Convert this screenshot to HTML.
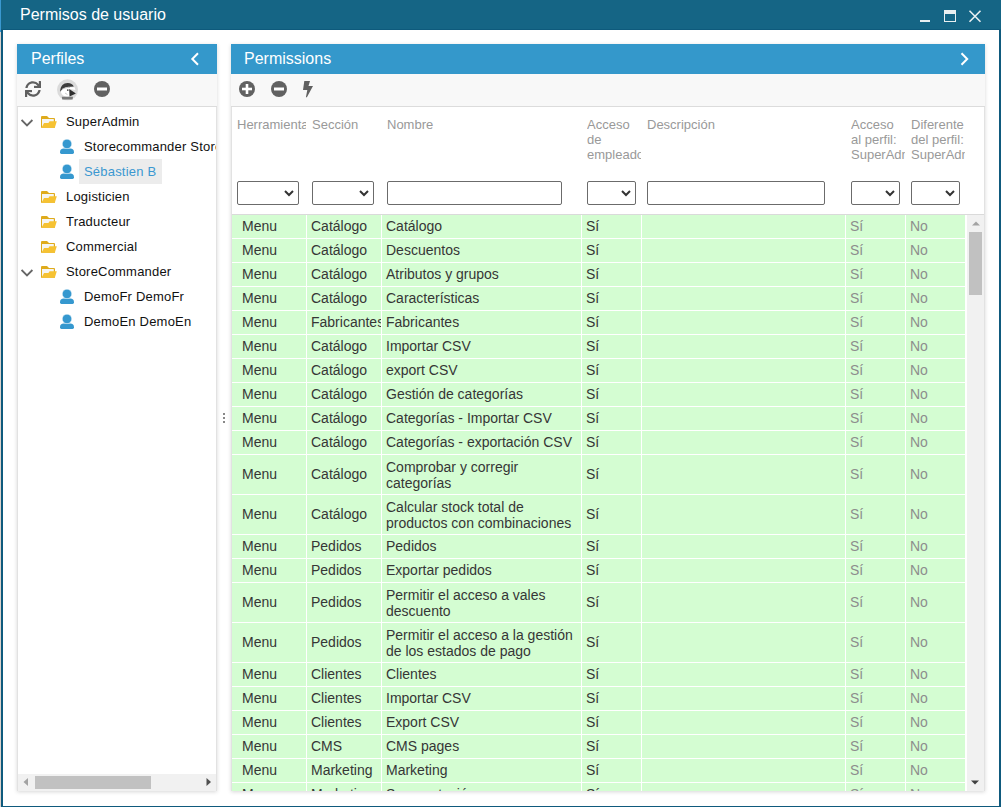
<!DOCTYPE html>
<html><head><meta charset="utf-8">
<style>
*{box-sizing:border-box}
html,body{margin:0;padding:0}
body{width:1001px;height:807px;overflow:hidden;position:relative;background:#fff;font-family:"Liberation Sans",sans-serif}
.abs{position:absolute}
#edge{position:absolute;left:0;top:0;width:1px;height:807px;background:#dcd2cc}
#edge2{position:absolute;left:0;top:0;width:1px;height:32px;background:#3a98d0}
#title{position:absolute;left:1px;top:0;width:1000px;height:30px;background:#156585;border-bottom:1px solid #0e5a7c}
#title .t{position:absolute;left:19px;top:6px;font-size:16px;line-height:18px;color:#fff}
#bl{position:absolute;left:1px;top:29px;width:2px;height:778px;background:#0f5a7d}
#br{position:absolute;left:999px;top:29px;width:2px;height:778px;background:#0f5a7d}
#bb{position:absolute;left:1px;top:806px;width:1000px;height:1px;background:#0f5a7d}
.panel{position:absolute;top:44px;height:747px;background:#fff;box-shadow:0 1px 4px rgba(0,0,0,.16)}
.ph{position:absolute;left:0;top:0;right:0;height:30px;background:#3498cb;color:#fff;font-size:16px;line-height:18px}
.ph .t{position:absolute;top:6px}
.tb{position:absolute;left:0;right:0;top:30px;height:33px;background:#f8f8f8;border-bottom:1px solid #dcdcdc}
.pbody{position:absolute;left:0;right:0;top:63px;bottom:0;overflow:hidden;border-left:1px solid #e2e2e2;border-right:1px solid #e2e2e2}
.tree{font-size:13px;color:#111}
.tr{position:absolute;height:25px;line-height:25px;white-space:nowrap;letter-spacing:0.2px}
.hdr{position:absolute;left:0;top:0;width:752px;height:108px;border-bottom:1px solid #dadada;background:#fff}
.hc{position:absolute;top:10px;font-size:13px;line-height:15px;color:#999;overflow:hidden;white-space:nowrap}
.sel{position:absolute;top:74px;height:24px;border:1px solid #6b6b6b;border-radius:2px;background:#fff}
.grid{position:absolute;left:0;top:108px;width:735px;height:576px;overflow:hidden}
.row{display:flex;border-bottom:1px solid #fff;box-sizing:content-box}
.cell{background:#d4fdd2;border-right:1px solid #fff;box-sizing:border-box;display:flex;align-items:center;padding:0 0 2px 4px;font-size:14px;line-height:16px;overflow:hidden;white-space:nowrap}
.cell span{display:block}
.cell.c1{padding-left:10px}
.r2 .cell{padding-bottom:2px}
.r2 .cell.ml{padding-bottom:0px}
.cell{margin-right:0}
.dk{color:#363636}
.gr{color:#8d8d8d}
</style></head><body>
<div id="edge"></div><div id="edge2"></div>
<div id="title"><div class="t">Permisos de usuario</div>
 <svg class="abs" style="left:917px;top:0" width="70" height="30" viewBox="0 0 70 30">
  <rect x="2" y="20" width="10" height="2" fill="#e9eff1"/>
  <rect x="26.5" y="10.5" width="11" height="11" fill="none" stroke="#e9eff1" stroke-width="1"/>
  <rect x="26" y="10" width="12" height="4" fill="#e9eff1"/>
  <path d="M51.5 10.7 L62.5 21.7 M62.5 10.7 L51.5 21.7" stroke="#e9eff1" stroke-width="1.6"/>
 </svg>
</div>
<div id="bl"></div><div id="br"></div><div id="bb"></div>

<!-- left panel -->
<div class="panel" style="left:17px;width:200px">
 <div class="ph"><div class="t" style="left:14px">Perfiles</div>
  <svg class="abs" style="left:173px;top:8px" width="10" height="14" viewBox="0 0 10 14"><path d="M8 1.2 L2.3 7 L8 12.8" fill="none" stroke="#fff" stroke-width="2"/></svg>
 </div>
 <div class="tb">
  <svg class="abs" style="left:8px;top:7px" width="16" height="16" viewBox="0 0 512 512"><path fill="#5f5f5f" d="M440.65 12.57l4 82.77A247.16 247.16 0 0 0 255.830 8C134.73 8 33.91 94.92 12.29 209.82A12 12 0 0 0 24.09 224h49.05a12 12 0 0 0 11.670-9.26 175.91 175.91 0 0 1 317-56.94l-101.46-4.86a12 12 0 0 0-12.570 12v47.41a12 12 0 0 0 12 12H500a12 12 0 0 0 12-12V12a12 12 0 0 0-12-12h-47.37a12 12 0 0 0-11.980 12.57zM255.83 432a175.61 175.61 0 0 1-146-77.8l101.8 4.87a12 12 0 0 0 12.570-12v-47.4a12 12 0 0 0-12-12H12a12 12 0 0 0-12 12V500a12 12 0 0 0 12 12h47.35a12 12 0 0 0 12-12.6l-4.15-82.57A247.17 247.17 0 0 0 255.83 504c121.110 0 221.930-86.92 243.550-201.82a12 12 0 0 0-11.800-14.18h-49.05a12 12 0 0 0-11.670 9.26A175.86 175.86 0 0 1 255.830 432z"/></svg>
  <svg class="abs" style="left:40px;top:5px" width="22" height="22" viewBox="0 0 22 22">
   <circle cx="10.5" cy="10.8" r="10.5" fill="#dbdbdb"/>
   <path d="M3.8 13 C4.5 9.5 8.5 8.2 13 8.2 L17.5 8.2 L18.5 11 L12.4 10 L12.6 17.6 C9 18.2 5 17 3.8 13 Z" fill="#fff"/>
   <path d="M3.2 12.2 C3.5 6.5 6.5 4 10.5 3.9 C13.5 3.8 15.8 5 16.8 7.6 L13 7.8 C9 7.8 5.5 9 3.6 12.4 Z" fill="#3b3b3b"/>
   <path d="M5 9.8 C7 8.6 10 8.1 13 8.2 L13 8.9 C10 8.9 7.5 9.3 5.5 10.5 Z" fill="#b8b8b8"/>
   <path d="M12.2 9.9 L18.9 14.6 L12.6 17.4 Z" fill="#2e2e2e"/>
   <circle cx="10.8" cy="11.1" r="0.9" fill="#444"/>
   <path d="M8 14 L10.5 15.6" stroke="#999" stroke-width="0.5"/>
   <path d="M4.8 17.8 L16 17.8 L15.6 20.4 L5.2 20.4 Z" fill="#666" opacity="0.85"/>
  </svg>
  <svg class="abs" style="left:77px;top:7px" width="16" height="16" viewBox="0 0 16 16">
   <circle cx="8" cy="8" r="8" fill="#616161"/><rect x="3" y="6.5" width="10" height="3" fill="#fff"/>
  </svg>
 </div>
 <div class="pbody tree">
  <svg class="abs" style="left:3px;top:12px" width="13" height="8" viewBox="0 0 13 8"><path d="M0.6 1 L6 6.4 L11.4 1" fill="none" stroke="#666" stroke-width="1.8"/></svg>
  <svg class="abs" style="left:23px;top:9px" width="16" height="12" viewBox="0 0 16 12"><path d="M0 1 Q0 0 1 0 L6 0 L8 2 L13 2 Q14 2 14 3 L14 11.8 L0 11.8 Z" fill="#dfab1c"/><path d="M1 3 L12.8 3 L12.8 7 L1 11 Z" fill="#f5f5f3"/><path d="M3 7 L7.4 7 L8.6 5.2 L15.8 5.2 L13.8 11.8 L0.5 11.8 Z" fill="#f6c232"/></svg>
  <div class="tr" style="left:48px;top:2px">SuperAdmin</div>
  <svg class="abs" style="left:42px;top:32px" width="14" height="16" viewBox="0 0 14 16"><path d="M0 13.3 Q0 9.6 3.8 9.6 L10.2 9.6 Q14 9.6 14 13.3 L14 13.6 Q14 15 12.6 15 L1.4 15 Q0 15 0 13.6 Z" fill="#3598cf"/><circle cx="7" cy="4.9" r="4.75" fill="#3598cf" stroke="#fff" stroke-width="0.5"/></svg>
  <div class="tr" style="left:66px;top:27px">Storecommander Storecommander</div>
  <svg class="abs" style="left:42px;top:57px" width="14" height="16" viewBox="0 0 14 16"><path d="M0 13.3 Q0 9.6 3.8 9.6 L10.2 9.6 Q14 9.6 14 13.3 L14 13.6 Q14 15 12.6 15 L1.4 15 Q0 15 0 13.6 Z" fill="#3598cf"/><circle cx="7" cy="4.9" r="4.75" fill="#3598cf" stroke="#fff" stroke-width="0.5"/></svg>
  <div class="tr" style="left:61px;top:52px;background:#ececec;color:#3b98d1;padding:0 6px 0 5px">Sébastien B</div>
  <svg class="abs" style="left:23px;top:84px" width="16" height="12" viewBox="0 0 16 12"><path d="M0 1 Q0 0 1 0 L6 0 L8 2 L13 2 Q14 2 14 3 L14 11.8 L0 11.8 Z" fill="#dfab1c"/><path d="M1 3 L12.8 3 L12.8 7 L1 11 Z" fill="#f5f5f3"/><path d="M3 7 L7.4 7 L8.6 5.2 L15.8 5.2 L13.8 11.8 L0.5 11.8 Z" fill="#f6c232"/></svg>
  <div class="tr" style="left:48px;top:77px">Logisticien</div>
  <svg class="abs" style="left:23px;top:109px" width="16" height="12" viewBox="0 0 16 12"><path d="M0 1 Q0 0 1 0 L6 0 L8 2 L13 2 Q14 2 14 3 L14 11.8 L0 11.8 Z" fill="#dfab1c"/><path d="M1 3 L12.8 3 L12.8 7 L1 11 Z" fill="#f5f5f3"/><path d="M3 7 L7.4 7 L8.6 5.2 L15.8 5.2 L13.8 11.8 L0.5 11.8 Z" fill="#f6c232"/></svg>
  <div class="tr" style="left:48px;top:102px">Traducteur</div>
  <svg class="abs" style="left:23px;top:134px" width="16" height="12" viewBox="0 0 16 12"><path d="M0 1 Q0 0 1 0 L6 0 L8 2 L13 2 Q14 2 14 3 L14 11.8 L0 11.8 Z" fill="#dfab1c"/><path d="M1 3 L12.8 3 L12.8 7 L1 11 Z" fill="#f5f5f3"/><path d="M3 7 L7.4 7 L8.6 5.2 L15.8 5.2 L13.8 11.8 L0.5 11.8 Z" fill="#f6c232"/></svg>
  <div class="tr" style="left:48px;top:127px">Commercial</div>
  <svg class="abs" style="left:3px;top:162px" width="13" height="8" viewBox="0 0 13 8"><path d="M0.6 1 L6 6.4 L11.4 1" fill="none" stroke="#666" stroke-width="1.8"/></svg>
  <svg class="abs" style="left:23px;top:159px" width="16" height="12" viewBox="0 0 16 12"><path d="M0 1 Q0 0 1 0 L6 0 L8 2 L13 2 Q14 2 14 3 L14 11.8 L0 11.8 Z" fill="#dfab1c"/><path d="M1 3 L12.8 3 L12.8 7 L1 11 Z" fill="#f5f5f3"/><path d="M3 7 L7.4 7 L8.6 5.2 L15.8 5.2 L13.8 11.8 L0.5 11.8 Z" fill="#f6c232"/></svg>
  <div class="tr" style="left:48px;top:152px">StoreCommander</div>
  <svg class="abs" style="left:42px;top:182px" width="14" height="16" viewBox="0 0 14 16"><path d="M0 13.3 Q0 9.6 3.8 9.6 L10.2 9.6 Q14 9.6 14 13.3 L14 13.6 Q14 15 12.6 15 L1.4 15 Q0 15 0 13.6 Z" fill="#3598cf"/><circle cx="7" cy="4.9" r="4.75" fill="#3598cf" stroke="#fff" stroke-width="0.5"/></svg>
  <div class="tr" style="left:66px;top:177px">DemoFr DemoFr</div>
  <svg class="abs" style="left:42px;top:207px" width="14" height="16" viewBox="0 0 14 16"><path d="M0 13.3 Q0 9.6 3.8 9.6 L10.2 9.6 Q14 9.6 14 13.3 L14 13.6 Q14 15 12.6 15 L1.4 15 Q0 15 0 13.6 Z" fill="#3598cf"/><circle cx="7" cy="4.9" r="4.75" fill="#3598cf" stroke="#fff" stroke-width="0.5"/></svg>
  <div class="tr" style="left:66px;top:202px">DemoEn DemoEn</div>
  <!-- h scrollbar -->
  <div class="abs" style="left:0;top:667px;width:198px;height:17px;background:#f1f1f1">
   <svg class="abs" style="left:5px;top:4px" width="6" height="8" viewBox="0 0 6 8"><path d="M5 0 L0.5 4 L5 8 Z" fill="#a3a3a3"/></svg>
   <div class="abs" style="left:17px;top:2px;width:116px;height:13px;background:#c1c1c1"></div>
   <svg class="abs" style="left:188px;top:4px" width="6" height="8" viewBox="0 0 6 8"><path d="M0.5 0 L5 4 L0.5 8 Z" fill="#505050"/></svg>
  </div>
 </div>
</div>

<!-- splitter dots -->
<div class="abs" style="left:223px;top:413px;width:2px;height:2px;background:#888"></div>
<div class="abs" style="left:223px;top:417px;width:2px;height:2px;background:#888"></div>
<div class="abs" style="left:223px;top:421px;width:2px;height:2px;background:#888"></div>

<!-- right panel -->
<div class="panel" style="left:231px;width:754px">
 <div class="ph"><div class="t" style="left:13px">Permissions</div>
  <svg class="abs" style="left:729px;top:8px" width="10" height="14" viewBox="0 0 10 14"><path d="M1.5 1.2 L7.2 7 L1.5 12.8" fill="none" stroke="#fff" stroke-width="2"/></svg>
 </div>
 <div class="tb">
  <svg class="abs" style="left:8px;top:7px" width="16" height="16" viewBox="0 0 16 16">
   <circle cx="8" cy="8" r="8" fill="#616161"/><rect x="3" y="6.7" width="10" height="2.6" fill="#fff"/><rect x="6.7" y="3" width="2.6" height="10" fill="#fff"/>
  </svg>
  <svg class="abs" style="left:40px;top:7px" width="16" height="16" viewBox="0 0 16 16">
   <circle cx="8" cy="8" r="8" fill="#616161"/><rect x="3" y="6.5" width="10" height="3" fill="#fff"/>
  </svg>
  <svg class="abs" style="left:72px;top:7px" width="11" height="17" viewBox="0 0 11 17"><path d="M1.3 0 L7 0 L5.5 5 L10 5 L3.9 16.2 L2.9 16.2 L4.3 9 L0 9 Z" fill="#616161"/></svg>
 </div>
 <div class="pbody" style="border-left:1px solid #e2e2e2">
  <div class="hdr">
   <div class="hc" style="left:5px;width:69px">Herramienta</div>
   <div class="hc" style="left:80px;width:69px">Sección</div>
   <div class="hc" style="left:155px;width:190px">Nombre</div>
   <div class="hc" style="left:355px;width:54px">Acceso<br>de<br>empleado</div>
   <div class="hc" style="left:415px;width:190px">Descripción</div>
   <div class="hc" style="left:619px;width:54px">Acceso<br>al perfil:<br>SuperAdmin</div>
   <div class="hc" style="left:679px;width:54px">Diferente<br>del perfil:<br>SuperAdmin</div>
   <div class="sel" style="left:5px;width:62px"><svg width="10" height="7" viewBox="0 0 10 7" style="position:absolute;right:4px;top:8px"><path d="M1 1 L5 5 L9 1" fill="none" stroke="#333" stroke-width="2"/></svg></div><div class="sel" style="left:80px;width:62px"><svg width="10" height="7" viewBox="0 0 10 7" style="position:absolute;right:4px;top:8px"><path d="M1 1 L5 5 L9 1" fill="none" stroke="#333" stroke-width="2"/></svg></div><div class="sel" style="left:155px;width:175px"></div><div class="sel" style="left:355px;width:49px"><svg width="10" height="7" viewBox="0 0 10 7" style="position:absolute;right:4px;top:8px"><path d="M1 1 L5 5 L9 1" fill="none" stroke="#333" stroke-width="2"/></svg></div><div class="sel" style="left:415px;width:178px"></div><div class="sel" style="left:619px;width:49px"><svg width="10" height="7" viewBox="0 0 10 7" style="position:absolute;right:4px;top:8px"><path d="M1 1 L5 5 L9 1" fill="none" stroke="#333" stroke-width="2"/></svg></div><div class="sel" style="left:679px;width:49px"><svg width="10" height="7" viewBox="0 0 10 7" style="position:absolute;right:4px;top:8px"><path d="M1 1 L5 5 L9 1" fill="none" stroke="#333" stroke-width="2"/></svg></div>
  </div>
  <div class="grid">
<div class="row" style="height:23px"><div class="cell c1 dk" style="width:75px"><span>Menu</span></div><div class="cell dk" style="width:75px"><span>Catálogo</span></div><div class="cell dk" style="width:200px"><span>Catálogo</span></div><div class="cell dk" style="width:60px"><span>Sí</span></div><div class="cell " style="width:204px"><span></span></div><div class="cell gr" style="width:60px"><span>Sí</span></div><div class="cell gr" style="width:60px"><span>No</span></div></div>
<div class="row" style="height:23px"><div class="cell c1 dk" style="width:75px"><span>Menu</span></div><div class="cell dk" style="width:75px"><span>Catálogo</span></div><div class="cell dk" style="width:200px"><span>Descuentos</span></div><div class="cell dk" style="width:60px"><span>Sí</span></div><div class="cell " style="width:204px"><span></span></div><div class="cell gr" style="width:60px"><span>Sí</span></div><div class="cell gr" style="width:60px"><span>No</span></div></div>
<div class="row" style="height:23px"><div class="cell c1 dk" style="width:75px"><span>Menu</span></div><div class="cell dk" style="width:75px"><span>Catálogo</span></div><div class="cell dk" style="width:200px"><span>Atributos y grupos</span></div><div class="cell dk" style="width:60px"><span>Sí</span></div><div class="cell " style="width:204px"><span></span></div><div class="cell gr" style="width:60px"><span>Sí</span></div><div class="cell gr" style="width:60px"><span>No</span></div></div>
<div class="row" style="height:23px"><div class="cell c1 dk" style="width:75px"><span>Menu</span></div><div class="cell dk" style="width:75px"><span>Catálogo</span></div><div class="cell dk" style="width:200px"><span>Características</span></div><div class="cell dk" style="width:60px"><span>Sí</span></div><div class="cell " style="width:204px"><span></span></div><div class="cell gr" style="width:60px"><span>Sí</span></div><div class="cell gr" style="width:60px"><span>No</span></div></div>
<div class="row" style="height:23px"><div class="cell c1 dk" style="width:75px"><span>Menu</span></div><div class="cell dk" style="width:75px"><span>Fabricantes</span></div><div class="cell dk" style="width:200px"><span>Fabricantes</span></div><div class="cell dk" style="width:60px"><span>Sí</span></div><div class="cell " style="width:204px"><span></span></div><div class="cell gr" style="width:60px"><span>Sí</span></div><div class="cell gr" style="width:60px"><span>No</span></div></div>
<div class="row" style="height:23px"><div class="cell c1 dk" style="width:75px"><span>Menu</span></div><div class="cell dk" style="width:75px"><span>Catálogo</span></div><div class="cell dk" style="width:200px"><span>Importar CSV</span></div><div class="cell dk" style="width:60px"><span>Sí</span></div><div class="cell " style="width:204px"><span></span></div><div class="cell gr" style="width:60px"><span>Sí</span></div><div class="cell gr" style="width:60px"><span>No</span></div></div>
<div class="row" style="height:23px"><div class="cell c1 dk" style="width:75px"><span>Menu</span></div><div class="cell dk" style="width:75px"><span>Catálogo</span></div><div class="cell dk" style="width:200px"><span>export CSV</span></div><div class="cell dk" style="width:60px"><span>Sí</span></div><div class="cell " style="width:204px"><span></span></div><div class="cell gr" style="width:60px"><span>Sí</span></div><div class="cell gr" style="width:60px"><span>No</span></div></div>
<div class="row" style="height:23px"><div class="cell c1 dk" style="width:75px"><span>Menu</span></div><div class="cell dk" style="width:75px"><span>Catálogo</span></div><div class="cell dk" style="width:200px"><span>Gestión de categorías</span></div><div class="cell dk" style="width:60px"><span>Sí</span></div><div class="cell " style="width:204px"><span></span></div><div class="cell gr" style="width:60px"><span>Sí</span></div><div class="cell gr" style="width:60px"><span>No</span></div></div>
<div class="row" style="height:23px"><div class="cell c1 dk" style="width:75px"><span>Menu</span></div><div class="cell dk" style="width:75px"><span>Catálogo</span></div><div class="cell dk" style="width:200px"><span>Categorías - Importar CSV</span></div><div class="cell dk" style="width:60px"><span>Sí</span></div><div class="cell " style="width:204px"><span></span></div><div class="cell gr" style="width:60px"><span>Sí</span></div><div class="cell gr" style="width:60px"><span>No</span></div></div>
<div class="row" style="height:23px"><div class="cell c1 dk" style="width:75px"><span>Menu</span></div><div class="cell dk" style="width:75px"><span>Catálogo</span></div><div class="cell dk" style="width:200px"><span>Categorías - exportación CSV</span></div><div class="cell dk" style="width:60px"><span>Sí</span></div><div class="cell " style="width:204px"><span></span></div><div class="cell gr" style="width:60px"><span>Sí</span></div><div class="cell gr" style="width:60px"><span>No</span></div></div>
<div class="row r2" style="height:39px"><div class="cell c1 dk" style="width:75px"><span>Menu</span></div><div class="cell dk" style="width:75px"><span>Catálogo</span></div><div class="cell dk ml" style="width:200px"><span>Comprobar y corregir<br>categorías</span></div><div class="cell dk" style="width:60px"><span>Sí</span></div><div class="cell " style="width:204px"><span></span></div><div class="cell gr" style="width:60px"><span>Sí</span></div><div class="cell gr" style="width:60px"><span>No</span></div></div>
<div class="row r2" style="height:39px"><div class="cell c1 dk" style="width:75px"><span>Menu</span></div><div class="cell dk" style="width:75px"><span>Catálogo</span></div><div class="cell dk ml" style="width:200px"><span>Calcular stock total de<br>productos con combinaciones</span></div><div class="cell dk" style="width:60px"><span>Sí</span></div><div class="cell " style="width:204px"><span></span></div><div class="cell gr" style="width:60px"><span>Sí</span></div><div class="cell gr" style="width:60px"><span>No</span></div></div>
<div class="row" style="height:23px"><div class="cell c1 dk" style="width:75px"><span>Menu</span></div><div class="cell dk" style="width:75px"><span>Pedidos</span></div><div class="cell dk" style="width:200px"><span>Pedidos</span></div><div class="cell dk" style="width:60px"><span>Sí</span></div><div class="cell " style="width:204px"><span></span></div><div class="cell gr" style="width:60px"><span>Sí</span></div><div class="cell gr" style="width:60px"><span>No</span></div></div>
<div class="row" style="height:23px"><div class="cell c1 dk" style="width:75px"><span>Menu</span></div><div class="cell dk" style="width:75px"><span>Pedidos</span></div><div class="cell dk" style="width:200px"><span>Exportar pedidos</span></div><div class="cell dk" style="width:60px"><span>Sí</span></div><div class="cell " style="width:204px"><span></span></div><div class="cell gr" style="width:60px"><span>Sí</span></div><div class="cell gr" style="width:60px"><span>No</span></div></div>
<div class="row r2" style="height:39px"><div class="cell c1 dk" style="width:75px"><span>Menu</span></div><div class="cell dk" style="width:75px"><span>Pedidos</span></div><div class="cell dk ml" style="width:200px"><span>Permitir el acceso a vales<br>descuento</span></div><div class="cell dk" style="width:60px"><span>Sí</span></div><div class="cell " style="width:204px"><span></span></div><div class="cell gr" style="width:60px"><span>Sí</span></div><div class="cell gr" style="width:60px"><span>No</span></div></div>
<div class="row r2" style="height:39px"><div class="cell c1 dk" style="width:75px"><span>Menu</span></div><div class="cell dk" style="width:75px"><span>Pedidos</span></div><div class="cell dk ml" style="width:200px"><span>Permitir el acceso a la gestión<br>de los estados de pago</span></div><div class="cell dk" style="width:60px"><span>Sí</span></div><div class="cell " style="width:204px"><span></span></div><div class="cell gr" style="width:60px"><span>Sí</span></div><div class="cell gr" style="width:60px"><span>No</span></div></div>
<div class="row" style="height:23px"><div class="cell c1 dk" style="width:75px"><span>Menu</span></div><div class="cell dk" style="width:75px"><span>Clientes</span></div><div class="cell dk" style="width:200px"><span>Clientes</span></div><div class="cell dk" style="width:60px"><span>Sí</span></div><div class="cell " style="width:204px"><span></span></div><div class="cell gr" style="width:60px"><span>Sí</span></div><div class="cell gr" style="width:60px"><span>No</span></div></div>
<div class="row" style="height:23px"><div class="cell c1 dk" style="width:75px"><span>Menu</span></div><div class="cell dk" style="width:75px"><span>Clientes</span></div><div class="cell dk" style="width:200px"><span>Importar CSV</span></div><div class="cell dk" style="width:60px"><span>Sí</span></div><div class="cell " style="width:204px"><span></span></div><div class="cell gr" style="width:60px"><span>Sí</span></div><div class="cell gr" style="width:60px"><span>No</span></div></div>
<div class="row" style="height:23px"><div class="cell c1 dk" style="width:75px"><span>Menu</span></div><div class="cell dk" style="width:75px"><span>Clientes</span></div><div class="cell dk" style="width:200px"><span>Export CSV</span></div><div class="cell dk" style="width:60px"><span>Sí</span></div><div class="cell " style="width:204px"><span></span></div><div class="cell gr" style="width:60px"><span>Sí</span></div><div class="cell gr" style="width:60px"><span>No</span></div></div>
<div class="row" style="height:23px"><div class="cell c1 dk" style="width:75px"><span>Menu</span></div><div class="cell dk" style="width:75px"><span>CMS</span></div><div class="cell dk" style="width:200px"><span>CMS pages</span></div><div class="cell dk" style="width:60px"><span>Sí</span></div><div class="cell " style="width:204px"><span></span></div><div class="cell gr" style="width:60px"><span>Sí</span></div><div class="cell gr" style="width:60px"><span>No</span></div></div>
<div class="row" style="height:23px"><div class="cell c1 dk" style="width:75px"><span>Menu</span></div><div class="cell dk" style="width:75px"><span>Marketing</span></div><div class="cell dk" style="width:200px"><span>Marketing</span></div><div class="cell dk" style="width:60px"><span>Sí</span></div><div class="cell " style="width:204px"><span></span></div><div class="cell gr" style="width:60px"><span>Sí</span></div><div class="cell gr" style="width:60px"><span>No</span></div></div>
<div class="row" style="height:23px"><div class="cell c1 dk" style="width:75px"><span>Menu</span></div><div class="cell dk" style="width:75px"><span>Marketing</span></div><div class="cell dk" style="width:200px"><span>Segmentación</span></div><div class="cell dk" style="width:60px"><span>Sí</span></div><div class="cell " style="width:204px"><span></span></div><div class="cell gr" style="width:60px"><span>Sí</span></div><div class="cell gr" style="width:60px"><span>No</span></div></div>
  </div>
  <!-- v scrollbar -->
  <div class="abs" style="left:735px;top:108px;width:17px;height:576px;background:#f1f1f1">
   <svg class="abs" style="left:4.5px;top:6px" width="8" height="5" viewBox="0 0 8 5"><path d="M0 4.5 L4 0.5 L8 4.5 Z" fill="#a3a3a3"/></svg>
   <div class="abs" style="left:2px;top:17px;width:13px;height:63px;background:#c1c1c1"></div>
   <svg class="abs" style="left:4px;top:565px" width="8" height="5" viewBox="0 0 8 5"><path d="M0 0.5 L4 4.5 L8 0.5 Z" fill="#404040"/></svg>
  </div>
 </div>
</div>
</body></html>
